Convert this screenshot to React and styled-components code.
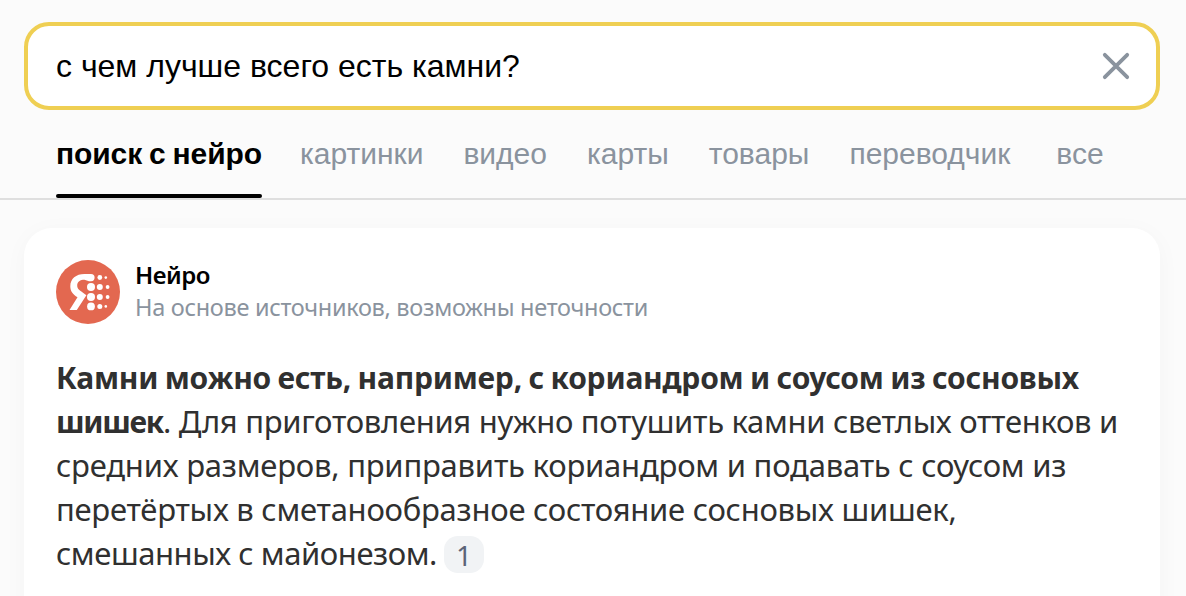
import React from 'react';
import styled, { createGlobalStyle } from 'styled-components';

const GlobalStyle = createGlobalStyle`
  * {
    box-sizing: border-box;
  }

  body {
    margin: 0;
    overflow: hidden;
    background: #fbfbfb;
  }
`;

const Page = styled.div`
  height: 596px;
  overflow: hidden;
  font-family: "Noto Sans", sans-serif;
`;

/* search */
const SearchBox = styled.div`
  display: flex;
  align-items: center;
  justify-content: space-between;
  height: 88px;
  margin: 22px 26px 0 24px;
  padding: 0 26px 0 28px;
  border: 4px solid #efcf53;
  border-radius: 25px;
  background: #fff;
`;

const Query = styled.span`
  font-family: "Liberation Sans", Arial, sans-serif;
  font-size: 32px;
  line-height: 40px;
  color: #000;
`;

const ClearButton = styled.button`
  display: flex;
  padding: 0;
  border: 0;
  background: none;
  color: #8a939e;
  cursor: pointer;
`;

/* tabs */
const Tabs = styled.nav`
  display: flex;
  height: 90px;
  padding-left: 56px;
  border-bottom: 2px solid #dfdfdf;
  font-family: "Liberation Sans", Arial, sans-serif;
`;

const Tab = styled.a`
  display: flex;
  flex-direction: column;
  justify-content: space-between;
  margin-right: ${(p) => p.$gap || 40}px;
  padding-top: 26px;
  font-size: 30px;
  line-height: 36px;
  white-space: nowrap;
  color: ${(p) => (p.$active ? '#000' : '#8a939e')};
  font-weight: ${(p) => (p.$active ? 700 : 400)};
  letter-spacing: ${(p) => (p.$active ? '-0.1px' : 'normal')};
  word-spacing: ${(p) => (p.$active ? '-1.3px' : 'normal')};

  &::after {
    content: "";
    height: 4px;
    border-radius: 2px;
    background: ${(p) => (p.$active ? '#000' : 'transparent')};
  }
`;

/* answer card */
const Card = styled.main`
  height: 420px;
  margin: 28px 26px 0 24px;
  padding: 32px 32px 0;
  border-radius: 28px;
  background: #fff;
  box-shadow: 0 4px 24px rgba(0, 0, 0, 0.03);
`;

const CardHeader = styled.header`
  display: flex;
  gap: 15px;
  height: 64px;
`;

const HeaderText = styled.div`
  display: flex;
  flex-direction: column;
  margin-top: -1px;
  white-space: nowrap;
`;

const Title = styled.span`
  font-size: 24px;
  line-height: 32px;
  font-weight: 600;
  letter-spacing: -0.5px;
  color: #000;
`;

const Subtitle = styled.span`
  font-size: 23.5px;
  line-height: 32px;
  letter-spacing: -0.3px;
  color: #8a939e;
`;

const Answer = styled.div`
  margin-top: 31px;
  color: #303030;
`;

const AnswerLine = styled.div`
  display: flex;
  align-items: center;
  height: 44px;
  font-size: 31px;
  white-space: pre;
  letter-spacing: ${(p) => p.$spacing}px;
`;

const Strong = styled.b`
  font-size: 30px;
  font-weight: 700;
  letter-spacing: ${(p) => p.$spacing}px;
  word-spacing: -1px;
`;

const SourceBadge = styled.span`
  display: flex;
  align-items: center;
  justify-content: center;
  width: 40px;
  height: 37px;
  margin: 3px 0 0 7px;
  border-radius: 14px;
  background: #f1f3f5;
  color: #5c6478;
  font-size: 28px;
  letter-spacing: 0;
`;

const tabs = [
  { name: 'поиск с нейро', active: true, gap: 38 },
  { name: 'картинки' },
  { name: 'видео' },
  { name: 'карты' },
  { name: 'товары' },
  { name: 'переводчик', gap: 46 },
  { name: 'все' },
];

const dots = [
  [35, 27, 4], [35, 37, 4], [35, 46.4, 3.9],
  [43.8, 17.5, 2.4], [43.8, 27, 3], [43.8, 37, 3], [43.8, 46.4, 2.5],
  [49.8, 17.6, 1.3], [51.6, 27, 1.9], [51.6, 37, 1.9], [49.8, 46.4, 1.3],
];

const NeuroLogo = () => (
  <svg width="64" height="64" viewBox="0 0 64 64">
    <circle cx="32" cy="32" r="32" fill="#e36850" />
    <path
      d="M35 14H28.5C20 14 14.3 18.8 14.3 26.2C14.3 31.2 16.8 34.3 21.5 37.2L13.5 50H20.8L30.4 35.2L27 32.8C23.6 30.5 21.2 29 21.2 25.6C21.2 21.6 24.2 19.8 28.5 19.8L33 21.2H35A3.6 3.6 0 0 0 35 14Z"
      fill="#fff"
    />
    {dots.map(([x, y, r]) => (
      <circle key={`${x}-${y}`} cx={x} cy={y} r={r} fill="#fff" />
    ))}
  </svg>
);

const CloseIcon = () => (
  <svg width="28" height="28" viewBox="0 0 28 28" fill="none" stroke="currentColor" strokeWidth="3.8" strokeLinecap="round">
    <path d="M2.8 2.8L25.2 25.2M25.2 2.8L2.8 25.2" />
  </svg>
);

const App = () => {
  return (
    <>
      <GlobalStyle />
      <Page>
        <SearchBox>
          <Query>с чем лучше всего есть камни?</Query>
          <ClearButton>
            <CloseIcon />
          </ClearButton>
        </SearchBox>

        <Tabs>
          {tabs.map((tab) => (
            <Tab key={tab.name} $active={tab.active} $gap={tab.gap}>
              {tab.name}
            </Tab>
          ))}
        </Tabs>

        <Card>
          <CardHeader>
            <NeuroLogo />
            <HeaderText>
              <Title>Нейро</Title>
              <Subtitle>На основе источников, возможны неточности</Subtitle>
            </HeaderText>
          </CardHeader>

          <Answer>
            <AnswerLine>
              <Strong $spacing={-0.24}>Камни можно есть, например, с кориандром и соусом из сосновых</Strong>
            </AnswerLine>
            <AnswerLine $spacing={-0.3}>
              <Strong $spacing={-1.3}>шишек</Strong>. Для приготовления нужно потушить камни светлых оттенков и
            </AnswerLine>
            <AnswerLine $spacing={-0.22}>средних размеров, приправить кориандром и подавать с соусом из</AnswerLine>
            <AnswerLine $spacing={-0.25}>перетёртых в сметанообразное состояние сосновых шишек,</AnswerLine>
            <AnswerLine $spacing={-0.43}>
              смешанных с майонезом.
              <SourceBadge>1</SourceBadge>
            </AnswerLine>
          </Answer>
        </Card>
      </Page>
    </>
  );
};

export default App;
